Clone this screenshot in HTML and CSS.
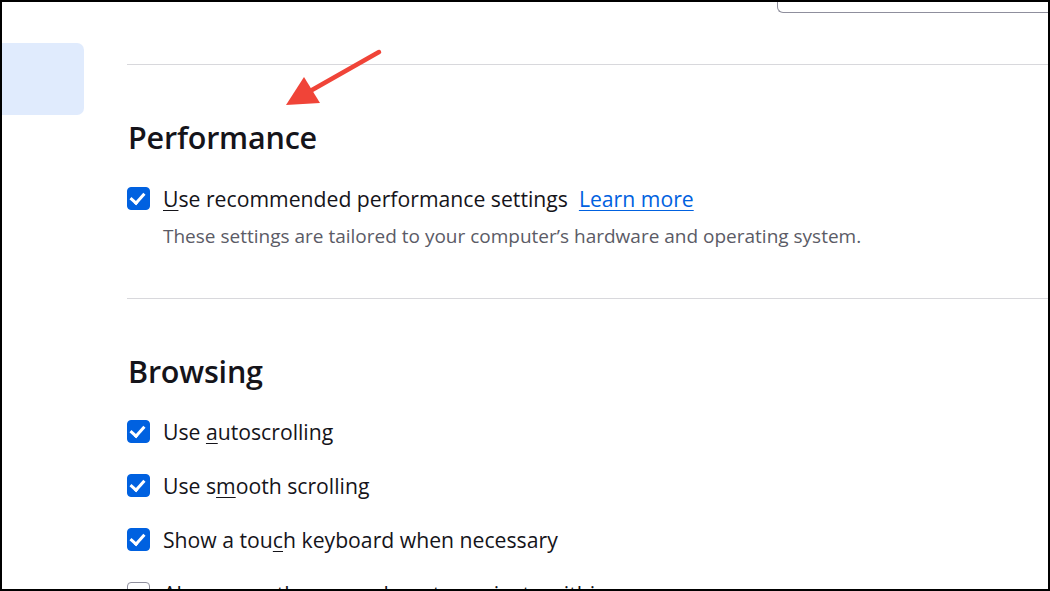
FILE: index.html
```html
<!doctype html>
<html>
<head>
	<meta charset="utf-8">
	<link rel="stylesheet" href="styles.css">
</head>
<body>

<div class="frame">

	<div class="sidebar">
		<div class="navitem"></div>
	</div>

	<div class="main">
		<div class="topbar"><div class="search"></div></div>

		<hr class="sep first">

		<h2 class="heading">Performance</h2>

		<div class="row">
			<span class="check on"></span>
			<span class="label"><u>U</u>se recommended performance settings</span>
			<a class="learn" href="#">Learn more</a>
		</div>
		<div class="desc">These settings are tailored to your computer’s hardware and operating system.</div>

		<hr class="sep">

		<h2 class="heading">Browsing</h2>

		<div class="row list"><span class="check on"></span><span class="label">Use <u>a</u>utoscrolling</span></div>
		<div class="row list"><span class="check on"></span><span class="label">Use s<u>m</u>ooth scrolling</span></div>
		<div class="row list"><span class="check on"></span><span class="label">Show a tou<u>c</u>h keyboard when necessary</span></div>
		<div class="row list"><span class="check"></span><span class="label">Always use the cursor keys to navigate within pages</span></div>
	</div>

	<svg class="arrow" width="120" height="80" viewBox="0 0 120 80">
		<line x1="95" y1="4" x2="28" y2="42" stroke="#f04438" stroke-width="4.5" stroke-linecap="round"/>
		<polygon points="2,57 20,29 36,55" fill="#f04438"/>
	</svg>

</div>

</body>
</html>
```

FILE: styles.css
```css
html, body { margin: 0; padding: 0; background: #fff; }
body { font-family: "Open Sans", "Noto Sans", sans-serif; color: #15141a; }

.frame { position: relative; box-sizing: border-box; width: 1050px; height: 591px; border: 2px solid #000; overflow: hidden; display: flex; background: #fff; }

.sidebar { width: 82px; flex: none; padding-top: 41px; }
.navitem { height: 72px; background: #e0ebfd; border-radius: 0 7px 7px 0; }

.main { flex: 1; margin-left: 43px; min-width: 0; }

.topbar { height: 11px; }
.search { margin-left: 650px; height: 10px; border: 1px solid #8f8f9d; border-top: none; border-radius: 0 0 0 6px; border-right: none; }

.sep { border: none; border-top: 1px solid #d8d8dc; margin: 50px 0 0; }
.sep.first { margin-top: 51px; }

.heading { font-size: 30.5px; font-weight: 600; line-height: 40px; margin: 55px 0 0 1px; letter-spacing: -0.2px; }

.row { display: flex; align-items: center; height: 30px; margin-top: 26px; font-size: 21.2px; }
.row.list { margin-top: 24px; height: 30px; }
.heading + .row.list { margin-top: 25px; }

.check { width: 21px; height: 21px; border-radius: 4px; border: 1px solid #8f8f9d; background: #fff; flex: none; margin-right: 13px; position: relative; }
.check.on { background: #0061e0; border-color: #0061e0; }
.check.on::after { content: ""; position: absolute; left: 5px; top: 2px; width: 6px; height: 11px; border: solid #fff; border-width: 0 3px 3px 0; transform: rotate(42deg); }

.label { white-space: nowrap; }
.label u { text-decoration-thickness: 1px; text-underline-offset: 3px; }

.learn { margin-left: 11px; color: #0061e0; text-decoration: underline; text-decoration-thickness: 1px; text-underline-offset: 3px; }

.desc { margin: 11px 0 0 36px; font-size: 19px; color: #5b5b66; line-height: 24px; white-space: nowrap; }

.sep + .heading { margin-top: 52px; }

.arrow { position: absolute; left: 282px; top: 46px; }
```
